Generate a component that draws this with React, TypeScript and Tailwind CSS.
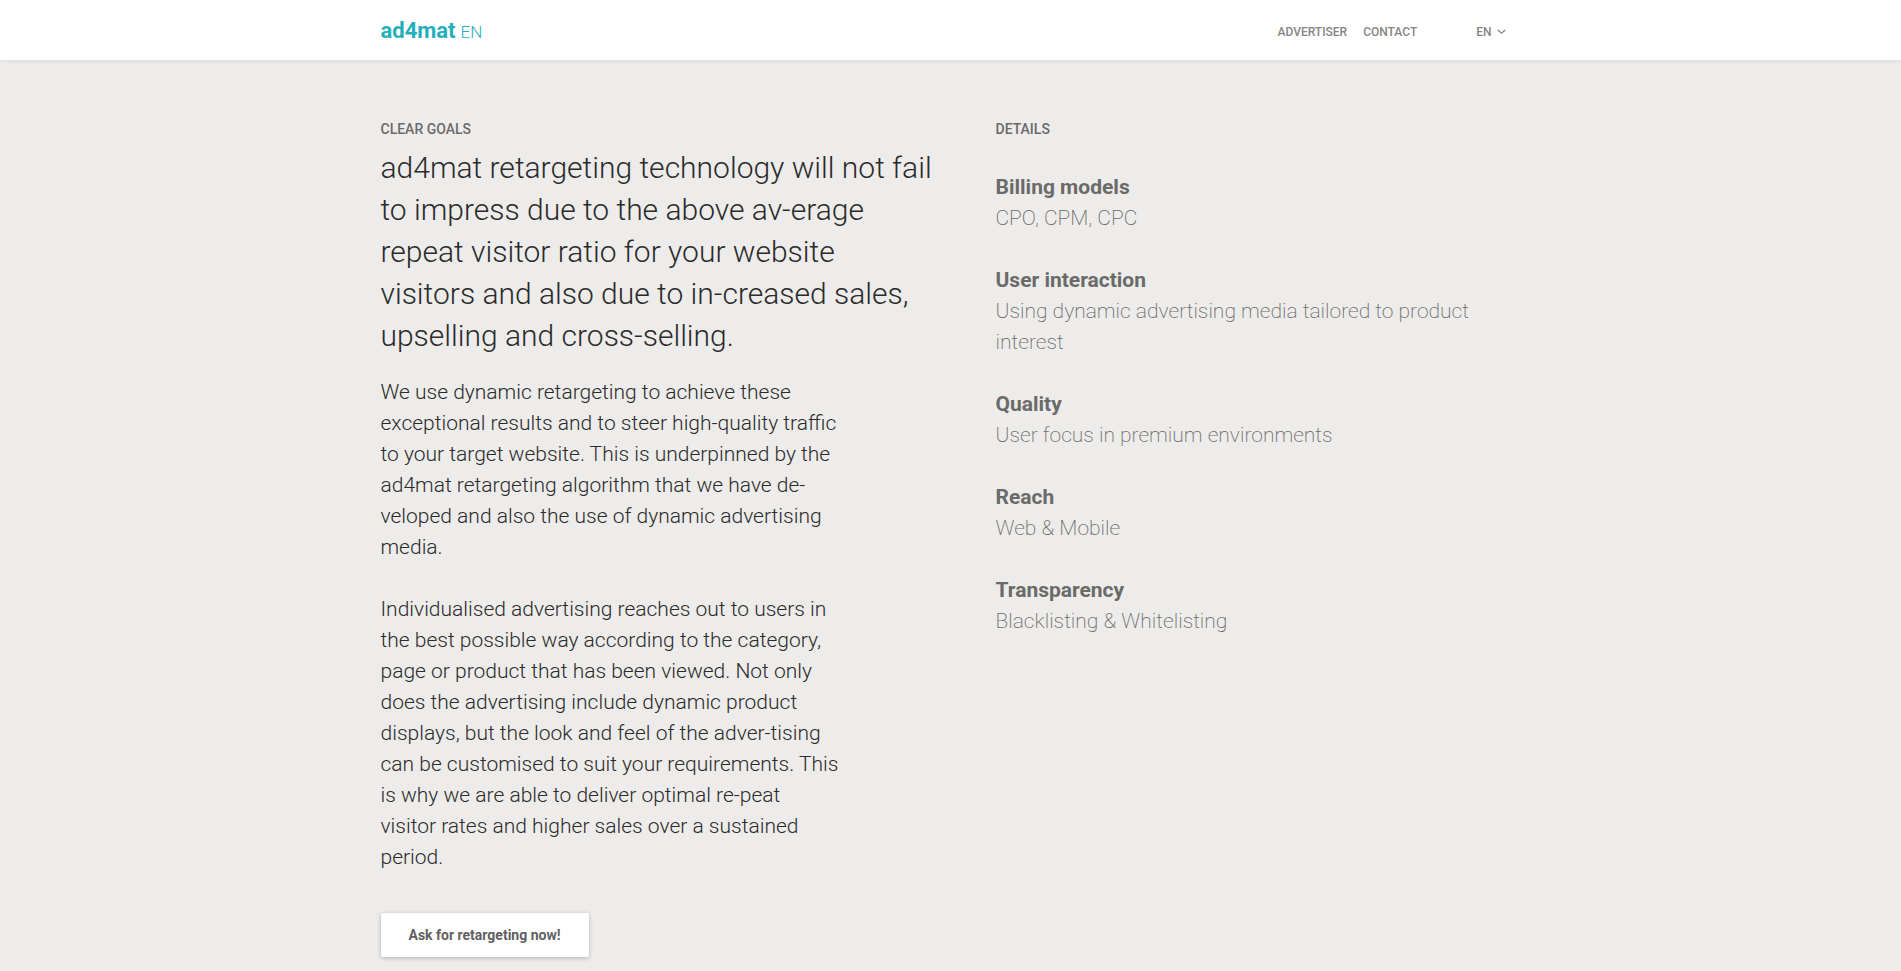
import { Fragment } from "react";

const heading = [
  "ad4mat retargeting technology will not fail",
  "to impress due to the above av-erage",
  "repeat visitor ratio for your website",
  "visitors and also due to in-creased sales,",
  "upselling and cross-selling.",
];

const paragraphs = [
  [
    "We use dynamic retargeting to achieve these",
    "exceptional results and to steer high-quality traffic",
    "to your target website. This is underpinned by the",
    "ad4mat retargeting algorithm that we have de-",
    "veloped and also the use of dynamic advertising",
    "media.",
  ],
  [
    "Individualised advertising reaches out to users in",
    "the best possible way according to the category,",
    "page or product that has been viewed. Not only",
    "does the advertising include dynamic product",
    "displays, but the look and feel of the adver-tising",
    "can be customised to suit your requirements. This",
    "is why we are able to deliver optimal re-peat",
    "visitor rates and higher sales over a sustained",
    "period.",
  ],
];

const details = [
  { title: "Billing models", lines: ["CPO, CPM, CPC"] },
  {
    title: "User interaction",
    lines: ["Using dynamic advertising media tailored to product", "interest"],
  },
  { title: "Quality", lines: ["User focus in premium environments"] },
  { title: "Reach", lines: ["Web & Mobile"] },
  { title: "Transparency", lines: ["Blacklisting & Whitelisting"] },
];

function Lines({ lines }: { lines: string[] }) {
  return (
    <>
      {lines.map((line, i) => (
        <Fragment key={line}>
          {i > 0 && <br />}
          {line}
        </Fragment>
      ))}
    </>
  );
}

function Header() {
  return (
    <header className="bg-white shadow-[0_1px_4px_rgba(0,0,0,0.08)]">
      <div className="mx-auto flex h-[60px] max-w-[1140px] items-center justify-between">
        <a href="#" className="flex items-baseline gap-[5px] text-[#24b0bb]">
          <span className="text-[22px] font-bold">ad4mat</span>
          <span className="text-[17px] font-light">EN</span>
        </a>
        <nav className="flex items-center pt-[3px] pr-[15px] text-[12px] font-medium text-[#858584]">
          <a href="#" className="mr-4">ADVERTISER</a>
          <a href="#" className="mr-[59px]">CONTACT</a>
          <button type="button" className="flex items-center gap-[5px]">
            EN
            <svg width="9" height="6" viewBox="0 0 9 6" fill="none" stroke="currentColor" strokeWidth="1.3" aria-hidden="true">
              <path d="M0.8 0.9 L4.5 4.2 L8.2 0.9" />
            </svg>
          </button>
        </nav>
      </div>
    </header>
  );
}

export default function App() {
  return (
    <div className="flex min-h-screen flex-col bg-[#edecea] font-['Roboto','Open_Sans',sans-serif]">
      <Header />
      <main className="mx-auto grid w-full max-w-[1140px] grid-cols-[555fr_525fr] gap-[60px] pt-[58px] pb-[13px]">
        <section>
          <h2 className="text-[14px] leading-[22px] font-medium text-[#6a6a69]">CLEAR GOALS</h2>
          <h1 className="mt-[7px] text-[30px] leading-[42px] font-light whitespace-nowrap text-[#2b2b2b]">
            <Lines lines={heading} />
          </h1>
          <div className="mt-5 flex flex-col gap-[31px] text-[21px] leading-[31px] font-light whitespace-nowrap text-[#2b2b2b]">
            {paragraphs.map((lines) => (
              <p key={lines[0]}>
                <Lines lines={lines} />
              </p>
            ))}
          </div>
          <button
            type="button"
            className="mt-10 h-[44px] w-[208px] rounded-[2px] bg-white text-[14px] font-bold text-[#60605f] shadow-[0_1px_4px_rgba(0,0,0,0.25)]"
          >
            Ask for retargeting now!
          </button>
        </section>
        <section>
          <h2 className="text-[14px] leading-[22px] font-medium text-[#6a6a69]">DETAILS</h2>
          <dl className="mt-8 flex flex-col gap-[31px] text-[21px] leading-[31px] whitespace-nowrap text-[#6a6a69]">
            {details.map(({ title, lines }) => (
              <div key={title}>
                <dt className="font-bold">{title}</dt>
                <dd className="font-extralight">
                  <Lines lines={lines} />
                </dd>
              </div>
            ))}
          </dl>
        </section>
      </main>
    </div>
  );
}
